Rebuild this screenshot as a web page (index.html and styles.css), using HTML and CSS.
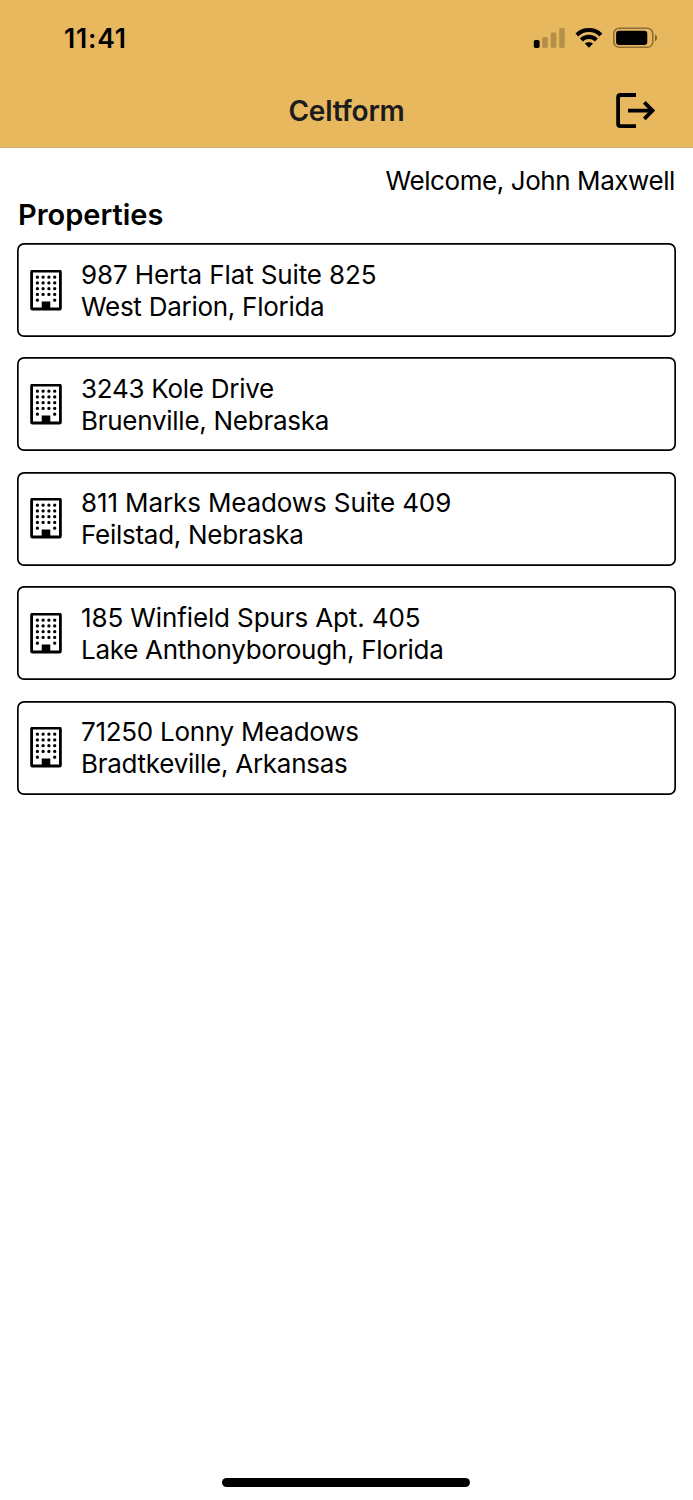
FILE: index.html
```
<!DOCTYPE html>
<html lang="en">
<head>
  <meta charset="UTF-8">
  <meta name="viewport" content="width=device-width, initial-scale=1.0">
  <title>Celtform</title>
  <link rel="stylesheet" href="styles.css">
</head>
<body>
  <svg class="defs" width="0" height="0">
    <symbol id="building" viewBox="0 0 32 41">
      <rect x="1.6" y="1.2" width="28.8" height="37.8" rx="0.8" fill="none" stroke="#000" stroke-width="2.8"/>
      <path d="M7.4 7.2v23.1M13.1 7.2v17.5M18.9 7.2v17.5M24.7 7.2v23.1" fill="none" stroke="#000" stroke-width="3.3" stroke-linecap="round" stroke-dasharray="0 5.75"/>
      <path d="M11.7 31.5h8.6v7h-8.6z"/>
    </symbol>
  </svg>

  <header class="header">
    <div class="status-bar">
      <span class="time">11:41</span>
      <svg class="status-icons" width="124" height="22" viewBox="533 27 124 22">
        <!-- signal -->
        <rect x="533.8" y="40" width="5.8" height="7.9" rx="1.6"/>
        <g opacity="0.22">
          <rect x="542.2" y="37" width="5.6" height="10.9" rx="1.6"/>
          <rect x="550.8" y="32.5" width="5.6" height="15.4" rx="1.6"/>
          <rect x="559.2" y="28" width="5.6" height="19.9" rx="1.6"/>
        </g>
        <!-- wifi -->
        <g fill="none" stroke="#000" stroke-width="4.2">
          <path d="M576.9 34.9a17.2 17.2 0 0 1 24 0"/>
          <path d="M581.4 40a10.8 10.8 0 0 1 15 0"/>
        </g>
        <path d="M588.9 47.8l-4.1-4.2a6 6 0 0 1 8.2 0z"/>
        <!-- battery -->
        <rect x="613.8" y="28.3" width="39" height="19" rx="5.4" fill="none" stroke="#000" stroke-opacity="0.4" stroke-width="1.6"/>
        <rect x="616.1" y="30.8" width="31.2" height="14.2" rx="3"/>
        <path d="M655 34.6c2.7 1 2.7 5.6 0 6.6z" opacity="0.45"/>
      </svg>
    </div>
    <div class="nav-bar">
      <h1 class="title">Celtform</h1>
      <svg class="logout" width="41" height="37" viewBox="616 92 41 37" fill="none" stroke="#000" stroke-width="3.8">
        <path d="M636 95h-15.5q-2.4 0-2.4 2.4v26.4q0 2.4 2.4 2.4H636"/>
        <path d="M628 110.6h24.5M644.3 102.4l8.2 8.2-8.2 8.2"/>
      </svg>
    </div>
  </header>

  <main class="content">
    <p class="welcome">Welcome, John Maxwell</p>
    <h2 class="heading">Properties</h2>
    <div class="properties">
      <div class="property">
        <svg class="icon"><use href="#building"/></svg>
        <div class="address"><span class="unit">987 Herta Flat Suite 825</span><span>West Darion, Florida</span></div>
      </div>
      <div class="property">
        <svg class="icon"><use href="#building"/></svg>
        <div class="address"><span>3243 Kole Drive</span><span>Bruenville, Nebraska</span></div>
      </div>
      <div class="property">
        <svg class="icon"><use href="#building"/></svg>
        <div class="address"><span class="unit">811 Marks Meadows Suite 409</span><span>Feilstad, Nebraska</span></div>
      </div>
      <div class="property">
        <svg class="icon"><use href="#building"/></svg>
        <div class="address"><span class="unit">185 Winfield Spurs Apt. 405</span><span>Lake Anthonyborough, Florida</span></div>
      </div>
      <div class="property">
        <svg class="icon"><use href="#building"/></svg>
        <div class="address"><span>71250 Lonny Meadows</span><span>Bradtkeville, Arkansas</span></div>
      </div>
    </div>
  </main>

  <div class="home-indicator"></div>
</body>
</html>
```
FILE: styles.css
```
* {
  box-sizing: border-box;
}
body {
  display: flex;
  flex-direction: column;
  height: 1500px;
  margin: 0;
  background-color: #fff;
  color: #000;
  font-family: Inter, sans-serif;
  font-size: 26px;
}
.defs {
  position: absolute;
}
.header {
  height: 148px;
  background-color: #e8b85f;
  border-bottom: 1px solid #d3ae6b;
}
.status-bar {
  display: flex;
  justify-content: space-between;
  align-items: center;
  height: 76px;
  padding: 0 36px 0 64px;
}
.time {
  font-size: 26.5px;
  font-weight: 600;
  line-height: 32px;
  letter-spacing: 0.8px;
}
.nav-bar {
  display: grid;
  grid-template-columns: 1fr auto 1fr;
  align-items: center;
  height: 69px;
  padding: 0 36px;
}
.title {
  grid-column: 2;
  margin: 0;
  color: #1c1c1e;
  font-size: 28px;
  font-weight: 600;
  line-height: 34px;
  letter-spacing: -0.2px;
}
.logout {
  justify-self: end;
}
.content {
  flex: 1;
  padding: 17px 17px 0;
}
.welcome {
  margin: 0;
  padding-right: 1px;
  text-align: right;
  line-height: 32px;
  letter-spacing: -0.42px;
}
.heading {
  margin: 0 0 10px;
  padding-left: 1px;
  font-size: 29px;
  font-weight: 600;
  line-height: 36px;
}
.properties {
  display: flex;
  flex-direction: column;
  gap: 20.4px;
}
.property {
  display: flex;
  align-items: center;
  gap: 19px;
  height: 94px;
  padding-left: 13px;
  border-radius: 7px;
  box-shadow: inset 0 0 0 1.7px #000;
}
.icon {
  width: 32px;
  height: 41px;
}
.address {
  padding-top: 1px;
}
.address span {
  display: block;
  line-height: 32px;
  letter-spacing: -0.27px;
}
.address .unit {
  letter-spacing: -0.12px;
}
.home-indicator {
  align-self: center;
  width: 248px;
  height: 9px;
  margin: 0 1px 13px 0;
  border-radius: 5px;
  background-color: #000;
}
```
